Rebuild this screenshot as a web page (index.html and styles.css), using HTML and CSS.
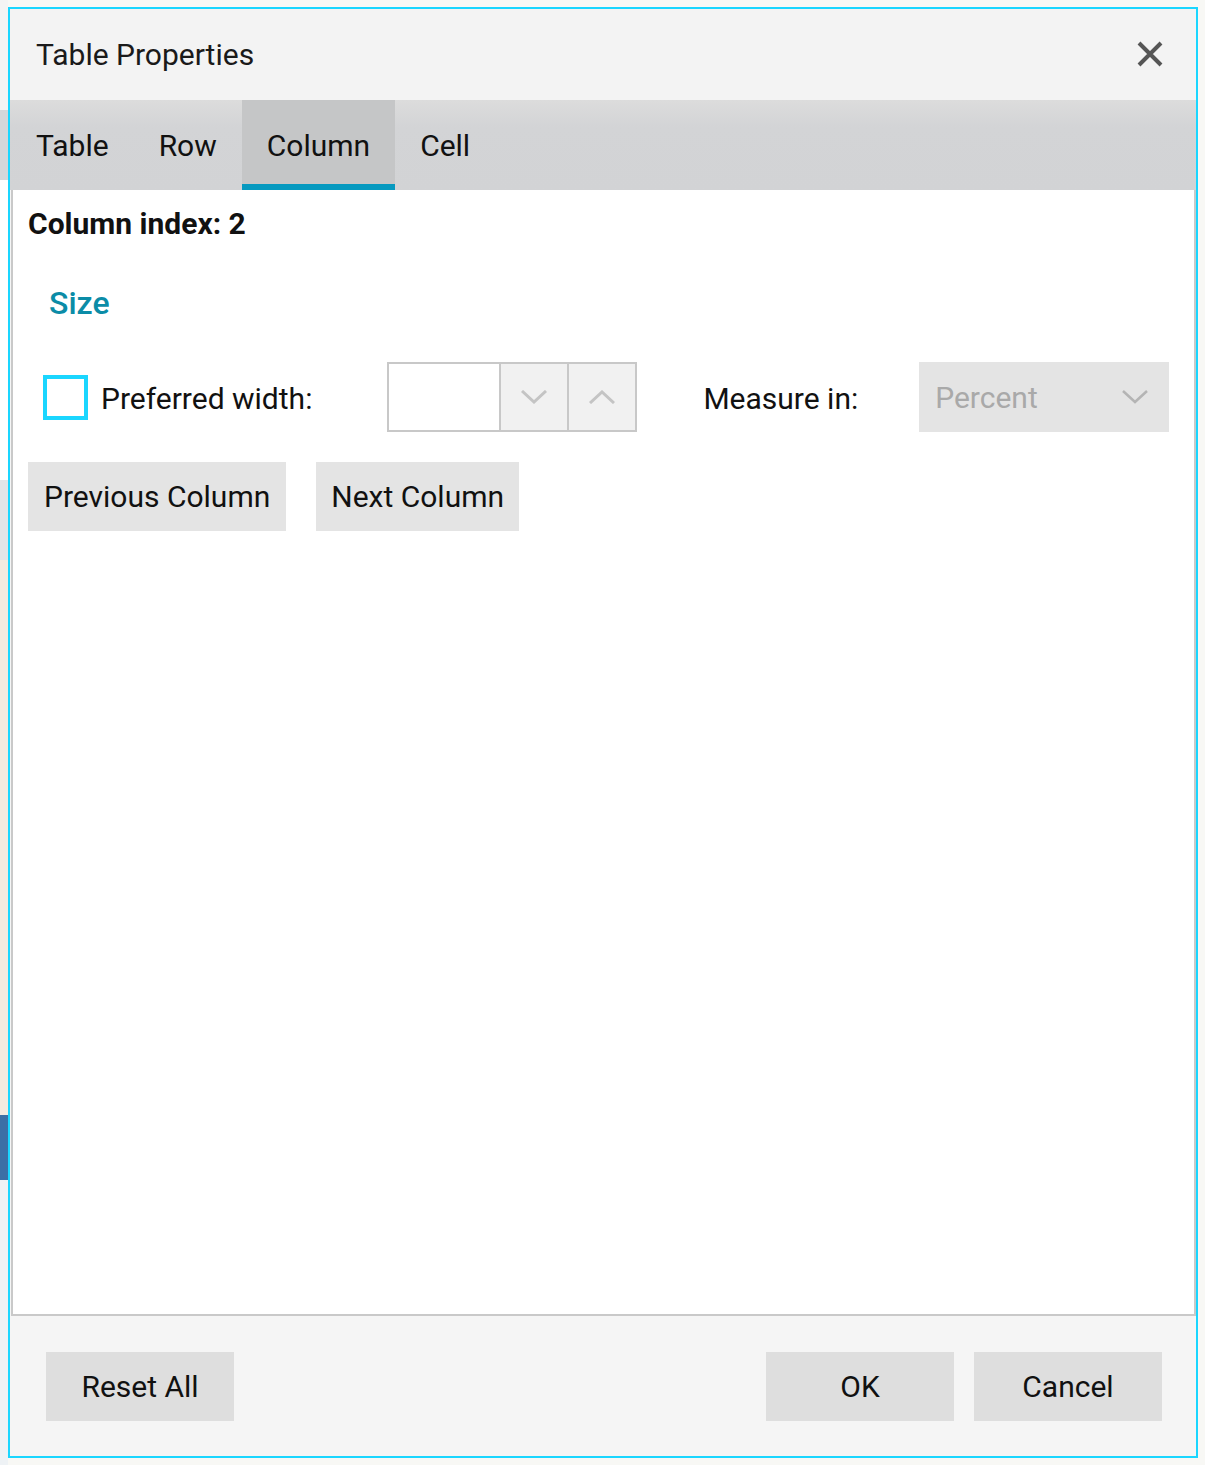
FILE: index.html
```html
<!DOCTYPE html>
<html lang="en">
<head>
    <meta charset="UTF-8">
    <meta name="viewport" content="width=device-width, initial-scale=1.0">
    <title>Table Properties</title>
    <link rel="stylesheet" href="styles.css">
</head>
<body>
<div class="dialog">
    <div class="dialog-header">
        <span class="dialog-title">Table Properties</span>
        <span class="close" title="Close">
            <svg width="26" height="26" viewBox="0 0 26 26">
                <path d="M2 2 L24 24 M24 2 L2 24" stroke="#555" stroke-width="4" fill="none"/>
            </svg>
        </span>
    </div>

    <div class="tabs">
        <div class="tab">Table</div>
        <div class="tab">Row</div>
        <div class="tab active">Column</div>
        <div class="tab">Cell</div>
    </div>

    <div class="panel">
        <div class="index-label">Column index: 2</div>
        <h3 class="section-title">Size</h3>

        <div class="size-row">
            <span class="checkbox"></span>
            <label class="field-label">Preferred width:</label>
            <div class="spinner">
                <input type="text" class="spinner-input">
                <span class="spin-btn">
                    <svg width="26" height="14" viewBox="0 0 26 14">
                        <path d="M1 1 L13 12 L25 1" stroke="#c4c4c4" stroke-width="3" fill="none"/>
                    </svg>
                </span>
                <span class="spin-btn">
                    <svg width="26" height="14" viewBox="0 0 26 14">
                        <path d="M1 13 L13 2 L25 13" stroke="#c4c4c4" stroke-width="3" fill="none"/>
                    </svg>
                </span>
            </div>
            <label class="field-label measure-label">Measure in:</label>
            <div class="select">
                <span>Percent</span>
                <svg width="26" height="14" viewBox="0 0 26 14">
                    <path d="M1 1 L13 12 L25 1" stroke="#b4b4b4" stroke-width="2.5" fill="none"/>
                </svg>
            </div>
        </div>

        <div class="nav-row">
            <button class="btn">Previous Column</button>
            <button class="btn btn-next">Next Column</button>
        </div>
    </div>

    <div class="dialog-footer">
        <button class="btn footer-btn">Reset All</button>
        <div class="footer-right">
            <button class="btn footer-btn">OK</button>
            <button class="btn footer-btn">Cancel</button>
        </div>
    </div>
</div>
</body>
</html>
```

FILE: styles.css
```css
body {
    margin: 0;
    font-family: Roboto, "Liberation Sans", Arial, sans-serif;
    font-size: 30px;
    color: #111;
    /* app window behind the dialog, only its edges show */
    background:
        linear-gradient(to bottom,
            #f4f4f4 0, #f4f4f4 110px,
            #d5d7da 110px, #d5d7da 180px,
            #ffffff 180px, #ffffff 480px,
            #e3e5e8 480px, #e3e5e8 560px,
            #f3ebe0 560px, #f3ebe0 1115px,
            #3c6fa5 1115px, #3c6fa5 1180px,
            #eef2f5 1180px) left top / 8px 100% no-repeat,
        #f8f8f5;
    height: 1465px;
    overflow: hidden;
}

.dialog {
    margin: 7px 0 0 8px;
    width: 1186px;
    height: 1447px;
    border: 2px solid #1ad6ff;
    background: #f5f5f5;
    display: flex;
    flex-direction: column;
}

.dialog-header {
    height: 91px;
    flex: none;
    background: #f3f3f3;
    display: flex;
    align-items: center;
    justify-content: space-between;
    padding: 0 33px 0 26px;
}

.dialog-title {
    color: #1a1a1a;
}

.close {
    display: flex;
    cursor: pointer;
    margin-top: -2px;
}

.tabs {
    height: 90px;
    flex: none;
    display: flex;
    background: linear-gradient(to bottom, #dcdcdc 0, #d3d4d6 30%, #d2d3d5 100%);
}

.tab {
    padding: 0 25px;
    display: flex;
    align-items: center;
    color: #111;
    cursor: pointer;
}

.tab:first-child {
    padding-left: 26px;
}

.tab.active {
    background: #c5c6c7;
    box-shadow: inset 0 -6px 0 #0699bf;
}

.panel {
    flex: 1;
    background: #fff;
    margin-left: 1px;
    border: 2px solid #c9c9c9;
    border-top: none;
    padding: 0 0 0 15px;
}

.index-label {
    font-weight: bold;
    margin-top: 17px;
    line-height: 34px;
}

.section-title {
    margin: 44px 0 0 21px;
    font-size: 32px;
    font-weight: 500;
    color: #0b8ca7;
    line-height: 36px;
}

.size-row {
    display: flex;
    align-items: center;
    margin-top: 41px;
    height: 70px;
}

.checkbox {
    width: 37px;
    height: 37px;
    border: 4px solid #1ad6ff;
    margin-left: 15px;
    flex: none;
}

.field-label {
    margin-left: 13px;
    margin-top: 2px;
}

.spinner {
    display: flex;
    margin-left: 75px;
    height: 66px;
    border: 2px solid #c8c8c8;
}

.spinner-input {
    width: 110px;
    border: none;
    padding: 0;
    margin: 0;
    outline: none;
    font: inherit;
}

.spin-btn {
    width: 66px;
    border-left: 2px solid #c8c8c8;
    background: #f1f1f1;
    display: flex;
    align-items: center;
    justify-content: center;
}

.measure-label {
    margin-left: 66px;
}

.select {
    margin-left: 61px;
    width: 250px;
    height: 70px;
    box-sizing: border-box;
    background: #e4e4e4;
    color: #a9a9a9;
    display: flex;
    align-items: center;
    justify-content: space-between;
    padding: 0 21px 0 16px;
}

.nav-row {
    display: flex;
    gap: 30px;
    margin-top: 30px;
}

.btn {
    font: inherit;
    color: #111;
    border: none;
    background: #e4e4e4;
    height: 69px;
    padding: 0 16px;
    cursor: pointer;
}

.btn-next {
    padding: 0 15px;
}

.dialog-footer {
    height: 140px;
    flex: none;
    background: #f5f5f5;
    display: flex;
    justify-content: space-between;
    align-items: flex-start;
    padding: 36px 34px 0 36px;
    box-sizing: border-box;
}

.footer-right {
    display: flex;
    gap: 20px;
}

.footer-btn {
    width: 188px;
    background: #dedede;
}
```
